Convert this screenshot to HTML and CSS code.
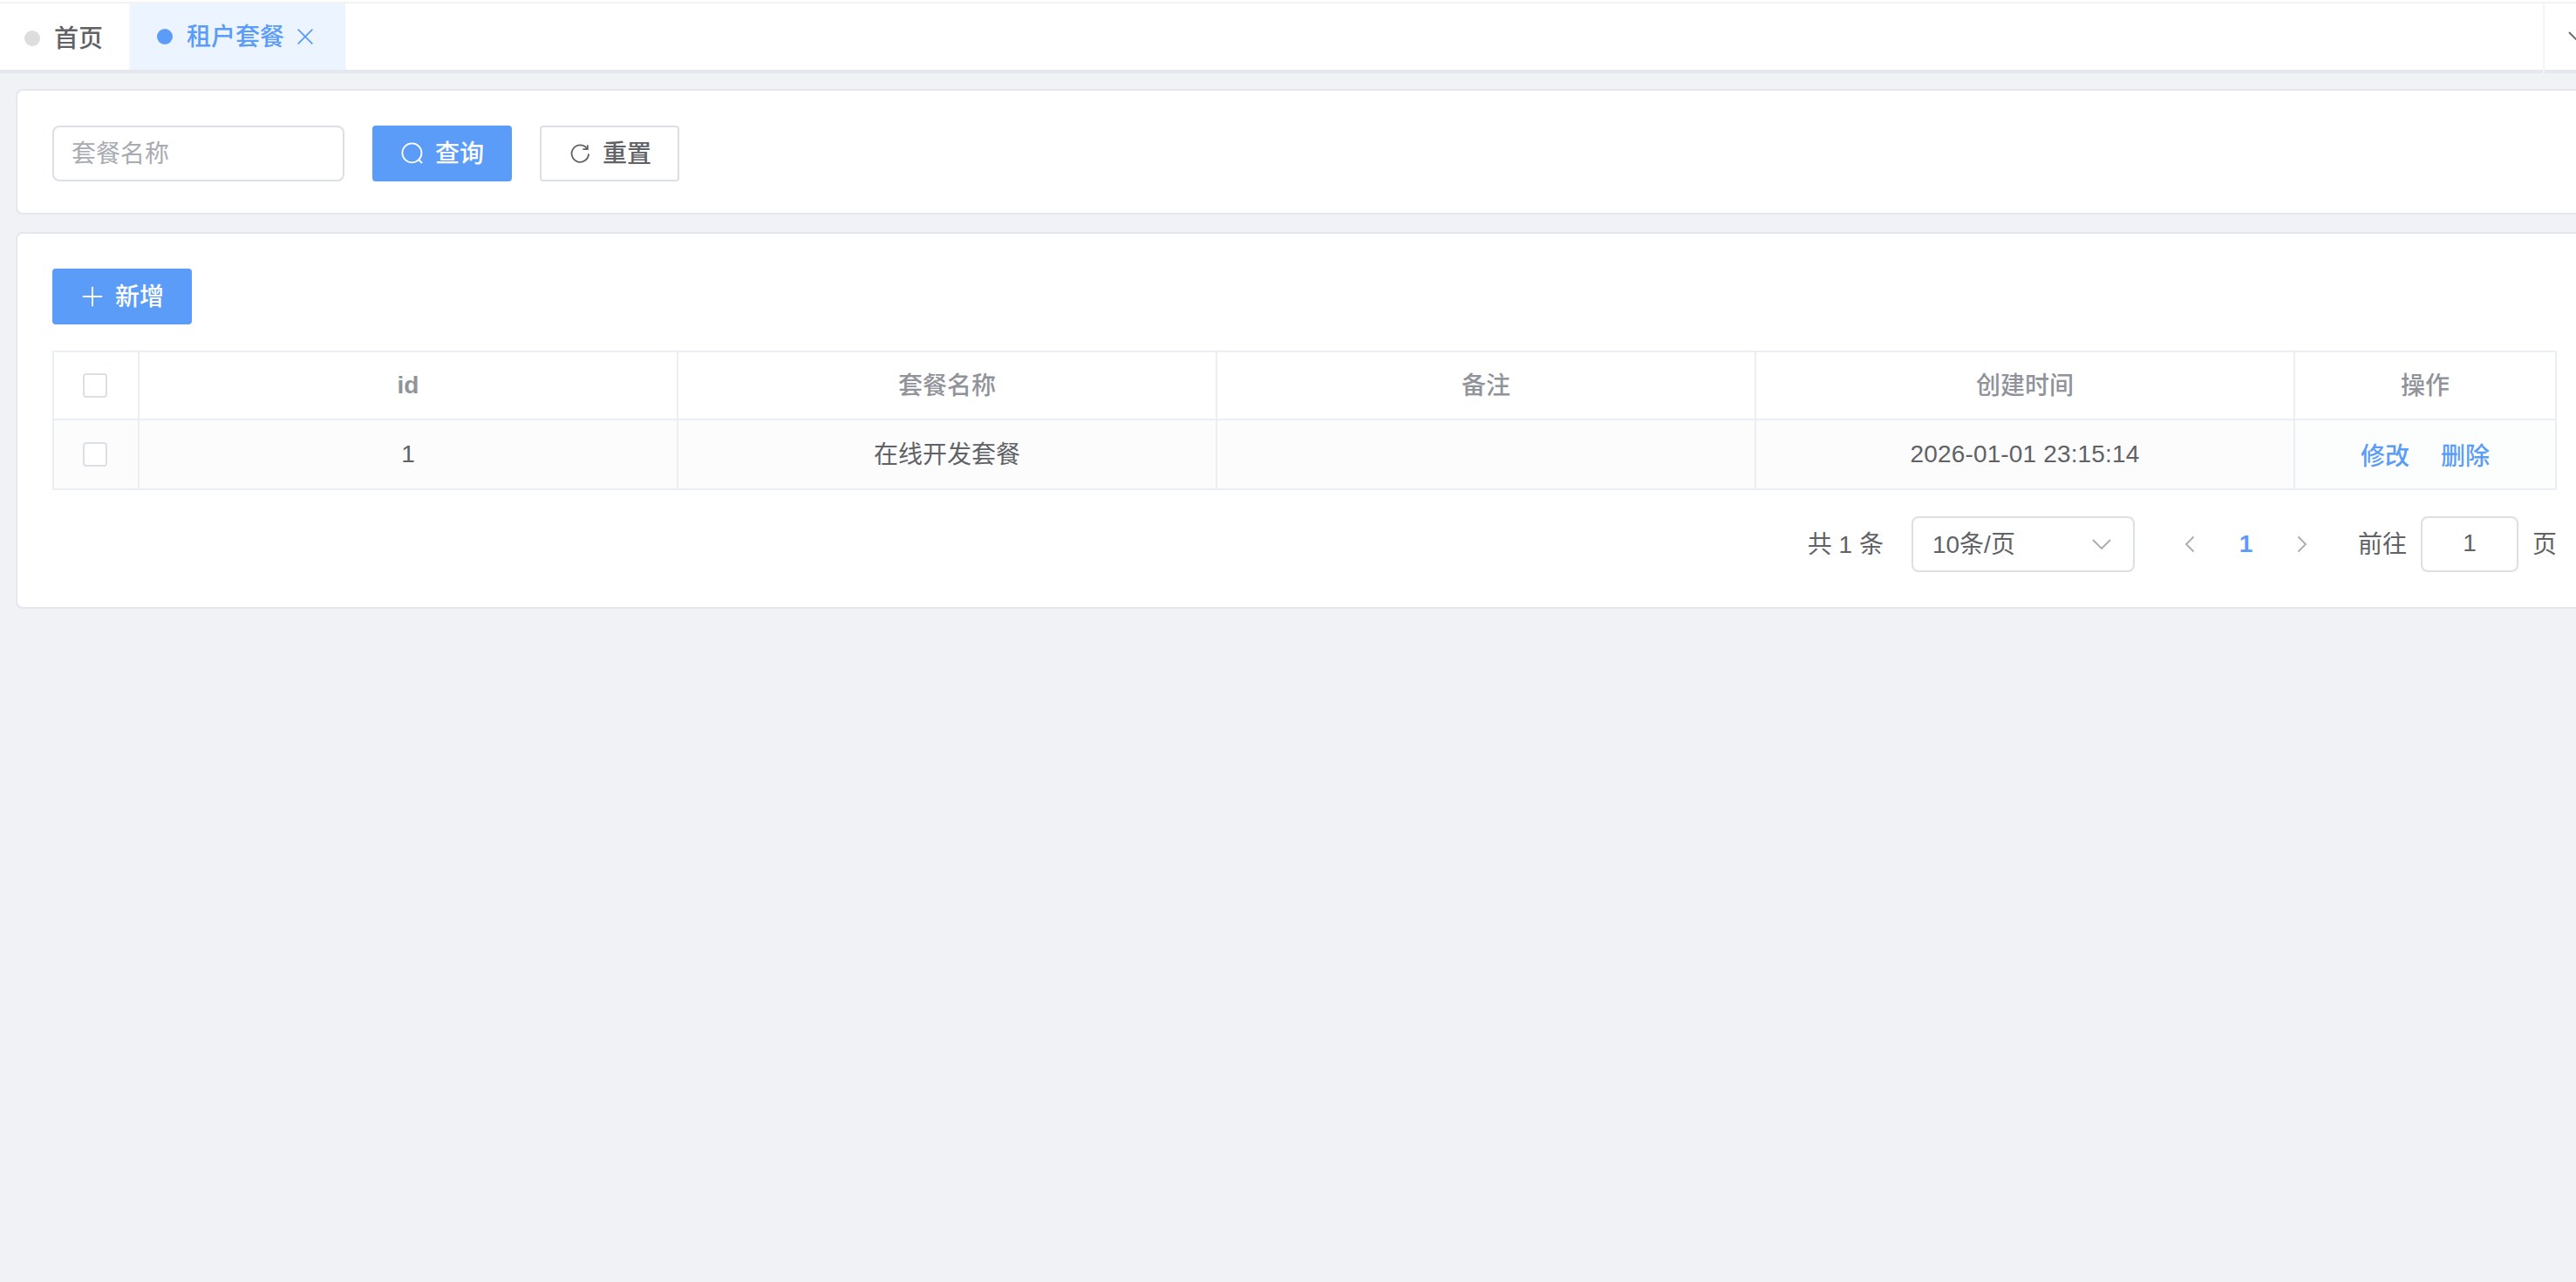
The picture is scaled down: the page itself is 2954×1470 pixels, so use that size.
FILE: index.html
```html
<!DOCTYPE html>
<html lang="zh-CN">
<head>
<meta charset="utf-8">
<title>租户套餐</title>
<link rel="stylesheet" href="styles.css">
</head>
<body>
<nav class="tabs">
  <a class="tab tab-home"><i class="dot"></i><span class="label">首页</span></a>
  <a class="tab tab-active"><i class="dot"></i><span class="label">租户套餐</span>
    <svg class="close" viewBox="0 0 20 20"><path d="M1.7 1.7 18.3 18.3M18.3 1.7 1.7 18.3"/></svg>
  </a>
  <div class="tabs-more"><svg class="more-icon" viewBox="0 0 20 12"><path d="M1 1 10 10 19 1"/></svg></div>
</nav>
<main class="content">
  <section class="card search">
    <div class="input">套餐名称</div>
    <button class="btn primary">
      <svg class="icon" viewBox="0 0 28 28"><circle cx="13.4" cy="13.4" r="11"/><path d="M20.8 20.8 25 25"/></svg><span class="label">查询</span>
    </button>
    <button class="btn">
      <svg class="icon" viewBox="0 0 28 28"><path d="M24 14.4A9.7 9.7 0 1 1 22 8.2M22.8 4.2V9.2H17.4"/></svg><span class="label">重置</span>
    </button>
  </section>
  <section class="card list">
    <button class="btn primary add">
      <svg class="icon" viewBox="0 0 28 28"><path d="M14 2.8V25.2M2.8 14H25.2"/></svg><span class="label">新增</span>
    </button>
    <table class="table">
      <colgroup><col class="col-check"><col class="col"><col class="col"><col class="col"><col class="col"><col class="col-ops"></colgroup>
      <thead>
        <tr><th><i class="checkbox"></i></th><th class="key">id</th><th class="cn">套餐名称</th><th class="cn">备注</th><th class="cn">创建时间</th><th class="cn">操作</th></tr>
      </thead>
      <tbody>
        <tr><td><i class="checkbox"></i></td><td>1</td><td class="cn">在线开发套餐</td><td></td><td class="time">2026-01-01 23:15:14</td><td class="ops"><div class="links"><a>修改</a><a>删除</a></div></td></tr>
      </tbody>
    </table>
    <div class="pagination">
      <span class="total label">共 1 条</span>
      <div class="select"><span class="label">10条/页</span><svg class="arrow" viewBox="0 0 22 12"><path d="M1 1 11 11 21 1"/></svg></div>
      <div class="pager">
        <svg class="step" viewBox="0 0 12 20"><path d="M10.5 1.5 2 10 10.5 18.5"/></svg>
        <b class="page">1</b>
        <svg class="step" viewBox="0 0 12 20"><path d="M1.5 1.5 10 10 1.5 18.5"/></svg>
      </div>
      <span class="label">前往</span>
      <div class="jump">1</div>
      <span class="label">页</span>
    </div>
  </section>
</main>
</body>
</html>
```

FILE: styles.css
```css
* { box-sizing: border-box; }
body {
  margin: 0;
  height: 1470px;
  overflow: hidden;
  background: #f0f2f5;
  color: #606266;
  font: 28px/32px "Liberation Sans", "Noto Sans CJK SC", sans-serif;
}
svg { display: block; flex: none; fill: none; stroke: currentColor; stroke-width: 1.8; }
.label { padding-top: 2px; }

.tabs {
  display: flex;
  height: 84px;
  margin: 0;
  padding-top: 4px;
  background: linear-gradient(#fff 2px, #f2f2f4 2px, #f2f2f4 4px, #fff 4px, #fff 80px, #e4e7ed 80px);
}
.tab {
  display: flex;
  align-items: center;
  height: 76px;
  font-weight: 500;
}
.tab-home { width: 148px; padding: 3px 0 0 28px; gap: 16px; }
.tab-active {
  width: 248px;
  padding-left: 30px;
  gap: 16px;
  background: #ecf5ff;
  color: #5b9cf8;
  border-left: 2px solid #f2f7ff;
}
.dot { width: 18px; height: 18px; border-radius: 50%; background: #ddd; flex: none; }
.tab-active .dot { background: #5b9cf8; }
.close { width: 20px; height: 20px; margin-left: -2px; }
.tabs-more {
  display: flex;
  width: 38px;
  height: 80px;
  margin-left: auto;
  padding: 32px 0 0 27px;
  border-left: 2px solid #f0f6fe;
}
.more-icon { width: 20px; height: 12px; }

.content { display: flex; flex-direction: column; gap: 20px; padding: 18px 0 0 18px; }
.card {
  width: 2956px;
  background: #fff;
  border: 2px solid #e4e7ed;
  border-radius: 8px;
}
.search { display: flex; gap: 32px; height: 144px; padding: 40px; }
.input {
  width: 335px;
  height: 64px;
  padding: 15px 20px;
  border: 2px solid #dcdfe6;
  border-radius: 8px;
  color: #a8abb2;
}
.btn {
  display: flex;
  align-items: center;
  justify-content: center;
  gap: 12px;
  width: 160px;
  height: 64px;
  padding: 0;
  border: 2px solid #dcdfe6;
  border-radius: 4px;
  background: #fff;
  color: #606266;
  font: inherit;
  font-weight: 500;
}
.primary { border-color: #5b9cf8; background: #5b9cf8; color: #fff; }
.icon { width: 28px; height: 28px; }

.list { height: 432px; padding: 40px 40px 0; }
.table {
  width: 2872px;
  margin-top: 30px;
  table-layout: fixed;
  border-collapse: separate;
  border-spacing: 0;
  border-top: 2px solid #ebeef5;
  border-left: 2px solid #ebeef5;
  text-align: center;
}
.col-check { width: 98px; }
.col { width: 618px; }
.col-ops { width: 300px; }
.table th, .table td {
  padding: 0;
  border-right: 2px solid #ebeef5;
  border-bottom: 2px solid #ebeef5;
}
.table th { height: 78px; color: #909399; font-weight: 500; }
.table .key { font-weight: 600; }
.table td { height: 80px; background: #fcfcfd; }
.table .cn { padding-top: 2px; }
.table .time { letter-spacing: 0.15px; }
.table .ops { background: #fcfefe; }
.checkbox {
  display: block;
  width: 28px;
  height: 28px;
  margin: 0 auto 0 33px;
  border: 2px solid #dcdfe6;
  border-radius: 4px;
  background: #fff;
}
.links { display: flex; justify-content: center; gap: 36px; padding-top: 5px; color: #5b9cf8; font-weight: 500; }

.pagination { display: flex; align-items: center; width: 2872px; height: 64px; margin-top: 30px; justify-content: flex-end; }
.total { margin-right: 32px; }
.select {
  display: flex;
  align-items: center;
  justify-content: space-between;
  width: 256px;
  height: 64px;
  padding: 0 25px 0 22px;
  border: 2px solid #dcdfe6;
  border-radius: 8px;
}
.arrow { width: 22px; height: 12px; color: #a8abb2; }
.pager { display: flex; align-items: center; justify-content: space-between; width: 141px; margin: 0 58px 0 57px; }
.page { color: #5b9cf8; }
.step { width: 12px; height: 20px; color: #a8abb2; }
.jump {
  width: 112px;
  height: 64px;
  margin: 0 16px;
  padding-top: 13px;
  border: 2px solid #dcdfe6;
  border-radius: 8px;
  text-align: center;
}
```
